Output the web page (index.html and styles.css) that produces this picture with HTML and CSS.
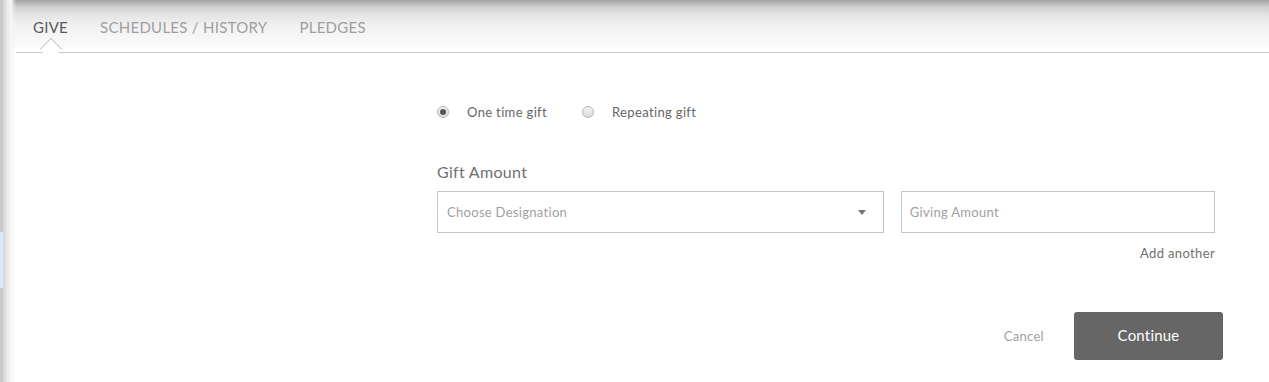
FILE: index.html
```html
<!DOCTYPE html>
<html>
<head>
<meta charset="utf-8">
<link rel="stylesheet" href="styles.css">
</head>
<body>
<div class="page">
  <div class="strip">
    <div class="strip-top"></div>
    <div class="strip-blue"></div>
    <div class="strip-rest"></div>
  </div>
  <div class="panel">
    <div class="tabs">
      <div class="tab active">GIVE<span class="notch"></span></div>
      <div class="tab">SCHEDULES / HISTORY</div>
      <div class="tab">PLEDGES</div>
    </div>
    <div class="content">
      <div class="form">
        <div class="radios">
          <label class="radio"><span class="dot checked"></span>One time gift</label>
          <label class="radio"><span class="dot"></span>Repeating gift</label>
        </div>
        <div class="section-title">Gift Amount</div>
        <div class="fields">
          <div class="field select"><span>Choose Designation</span><span class="caret"></span></div>
          <div class="field amount"><span>Giving Amount</span></div>
        </div>
        <div class="add-row"><span class="add">Add another</span></div>
        <div class="actions">
          <span class="cancel">Cancel</span>
          <button class="continue">Continue</button>
        </div>
      </div>
    </div>
  </div>
</div>
</body>
</html>
```
FILE: styles.css
```css
html, body {
  margin: 0;
  padding: 0;
  height: 100%;
  background: #fff;
  font-family: Lato, "Liberation Sans", sans-serif;
  font-weight: 400;
}
.page {
  display: flex;
  height: 382px;
  overflow: hidden;
}
.strip {
  width: 3px;
  display: flex;
  flex-direction: column;
  background: #c9c9c9;
}
.strip-top { height: 232px; }
.strip-blue { height: 56px; background: #d8e9fb; }
.strip-rest { flex: 1; }
.panel {
  flex: 1;
  background:
    linear-gradient(to right, #d4d4d4 0, #e8e8e8 4px, #f6f6f6 8px, rgba(255,255,255,0) 13px),
    linear-gradient(#a3a3a3 0, #cfcfcf 7px, #e6e6e6 16px, #f3f3f3 28px, #fafafa 45px, #ffffff 52px);
  background-repeat: no-repeat;
  display: flex;
  flex-direction: column;
}
.tabs {
  margin-left: 13px;
  height: 52px;
  border-bottom: 1px solid #c9c9c9;
  display: flex;
  align-items: flex-start;
  padding-left: 1px;
}
.tab {
  position: relative;
  padding: 18px 16px 0;
  font-size: 15px;
  color: #9e9e9e;
  letter-spacing: 0.27px;
  line-height: 18px;
}
.tab.active { color: #5a5a5a; }
.notch {
  position: absolute;
  left: 50%;
  top: 41px;
  width: 15px;
  height: 15px;
  margin-left: -8px;
  background: #fff;
  border-left: 1px solid #c9c9c9;
  border-top: 1px solid #c9c9c9;
  transform: rotate(45deg);
}
.content {
  flex: 1;
  padding-left: 434px;
}
.form {
  width: 778px;
  display: flex;
  flex-direction: column;
}
.radios {
  display: flex;
  padding-top: 50px;
  height: 18px;
  align-items: center;
}
.radio {
  display: flex;
  align-items: center;
  font-size: 13px;
  color: #666;
  letter-spacing: 0.35px;
  margin-right: 35px;
}
.dot {
  width: 10px;
  height: 10px;
  border-radius: 50%;
  border: 1px solid #b5b5b5;
  background: linear-gradient(#f4f4f4, #dcdcdc);
  margin-right: 18px;
  position: relative;
}
.dot.checked::after {
  content: "";
  position: absolute;
  left: 2px;
  top: 2px;
  width: 6px;
  height: 6px;
  border-radius: 50%;
  background: #555;
}
.section-title {
  margin-top: 41px;
  font-size: 16px;
  color: #707070;
  line-height: 20px;
  letter-spacing: 0.3px;
}
.fields {
  display: flex;
  margin-top: 9px;
  gap: 16px;
}
.field {
  border: 1px solid #c4c4c4;
  display: flex;
  align-items: center;
  font-size: 13px;
  color: #a0a0a0;
  letter-spacing: 0.3px;
  box-sizing: border-box;
  height: 42px;
}
.select {
  width: 448px;
  padding-left: 9px;
  justify-content: space-between;
}
.amount {
  width: 315px;
  padding-left: 8px;
  margin-left: 1px;
}
.caret {
  width: 0;
  height: 0;
  border-left: 4px solid transparent;
  border-right: 4px solid transparent;
  border-top: 5px solid #777;
  margin-right: 17px;
}
.add-row {
  display: flex;
  justify-content: flex-end;
  margin-top: 12px;
}
.add {
  font-size: 13px;
  color: #707070;
  letter-spacing: 0.35px;
}
.actions {
  display: flex;
  justify-content: flex-end;
  align-items: center;
  margin-top: 51px;
  margin-right: -8px;
}
.cancel {
  font-size: 13px;
  color: #a0a0a0;
  letter-spacing: 0.3px;
  margin-right: 30px;
}
.continue {
  width: 149px;
  height: 48px;
  border: none;
  border-radius: 3px;
  background: #666;
  color: #fff;
  font-family: Lato, "Liberation Sans", sans-serif;
  font-weight: 400;
  font-size: 15px;
  letter-spacing: 0.2px;
  padding: 0 0 3px;
}
```
